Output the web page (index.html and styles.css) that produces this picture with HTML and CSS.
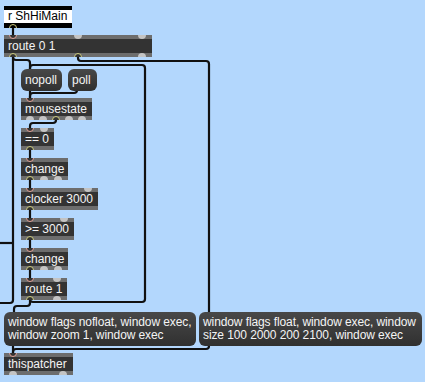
FILE: index.html
```html
<!DOCTYPE html>
<html lang="en">
  <head>
    <meta charset="UTF-8" />
    <title>ShHiMain patcher</title>
    <link rel="stylesheet" href="styles.css">
  </head>
  <body>
    <div class="patcher">
      <svg class="cords" width="425" height="382" viewBox="0 0 425 382">
        <!-- receive -> route -->
        <path d="M13 26 V38" />
        <!-- route left outlet -->
        <path d="M13 55 V57 Q13 60 16 60 H27 Q30 60 30 63 V71" />
        <path d="M13 55 V300 Q13 303 10 303 H0" />
        <path d="M0 243 H13" />
        <!-- route middle outlet -> float message -->
        <path d="M78 55 V58 Q78 61 81 61 H206 Q209 61 209 64 V314" />
        <!-- route 1 loops back to nopoll -->
        <path d="M30 298 V299 Q30 302 33 302 H142 Q145 302 145 299 V68 Q145 65 142 65 H33 Q30 65 30 68 V71" />
        <!-- message boxes -> mousestate -->
        <path d="M30 89 V100" />
        <path d="M77 89 V90 Q77 93 74 93 H33 Q30 93 30 96 V100" />
        <!-- mousestate chain -->
        <path d="M56 118 V120 Q56 123 53 123 H33 Q30 123 30 126 V130" />
        <path d="M30 148 V160" />
        <path d="M30 178 V190" />
        <path d="M30 208 V220" />
        <path d="M30 238 V250" />
        <path d="M30 268 V280" />
        <path d="M30 298 V303 Q30 306 27 306 H17 Q14 306 14 309 V314" />
        <!-- messages -> thispatcher -->
        <path d="M13 344 V354" />
        <path d="M209 344 V346 Q209 349 206 349 H16 Q13 349 13 352 V354" />
      </svg>

      <div class="obj recv">
        <div class="label">r ShHiMain</div>
        <div class="ports bottom"><i class="out on"></i></div>
      </div>

      <div class="obj route01">
        <div class="ports top"><i class="in on"></i><i></i><i></i></div>
        <div class="label">route 0 1</div>
        <div class="ports bottom"><i class="out on"></i><i class="out on"></i><i></i></div>
      </div>

      <div class="msg nopoll">nopoll</div>
      <div class="msg poll">poll</div>

      <div class="obj mousestate">
        <div class="ports top"><i class="in on"></i></div>
        <div class="label">mousestate</div>
        <div class="ports bottom"><i></i><i></i><i class="out on"></i><i></i><i></i></div>
      </div>

      <div class="obj eq0">
        <div class="ports top"><i class="in on"></i><i></i></div>
        <div class="label">== 0</div>
        <div class="ports bottom"><i class="out on"></i></div>
      </div>

      <div class="obj change1">
        <div class="ports top"><i class="in on"></i></div>
        <div class="label">change</div>
        <div class="ports bottom"><i class="out on"></i><i></i><i></i></div>
      </div>

      <div class="obj clocker">
        <div class="ports top"><i class="in on"></i><i></i></div>
        <div class="label">clocker 3000</div>
        <div class="ports bottom"><i class="out on"></i></div>
      </div>

      <div class="obj gte">
        <div class="ports top"><i class="in on"></i><i></i></div>
        <div class="label">&gt;= 3000</div>
        <div class="ports bottom"><i class="out on"></i></div>
      </div>

      <div class="obj change2">
        <div class="ports top"><i class="in on"></i></div>
        <div class="label">change</div>
        <div class="ports bottom"><i class="out on"></i><i></i><i></i></div>
      </div>

      <div class="obj route1">
        <div class="ports top"><i class="in on"></i><i></i></div>
        <div class="label">route 1</div>
        <div class="ports bottom"><i class="out on"></i><i></i></div>
      </div>

      <div class="msg nofloat">window flags nofloat, window exec,<br>window zoom 1, window exec</div>
      <div class="msg float">window flags float, window exec, window<br>size 100 2000 200 2100, window exec</div>

      <div class="obj thispatcher">
        <div class="ports top"><i class="in on"></i></div>
        <div class="label">thispatcher</div>
        <div class="ports bottom"><i></i><i></i></div>
      </div>
    </div>
  </body>
</html>
```

FILE: styles.css
```css
body {
  margin: 0;
  background: #b3d7fd;
}
.patcher {
  position: relative;
  width: 425px;
  height: 382px;
  overflow: hidden;
  background: #b3d7fd;
  font-family: "Liberation Sans", Arial, sans-serif;
  font-size: 12px;
}
.cords {
  position: absolute;
  left: 0;
  top: 0;
}
.cords path {
  fill: none;
  stroke: #111;
  stroke-width: 2.2;
  stroke-linecap: butt;
}

/* object boxes */
.obj {
  position: absolute;
  height: 22px;
  padding: 0 4px;
  overflow: hidden;
  color: #f4f4f4;
  line-height: 22px;
  white-space: nowrap;
  background: linear-gradient(#6d6d6d 4px, #333 4px, #333 18px, #6d6d6d 18px);
}
.label {
  position: relative;
  z-index: 1;
}
.ports {
  position: absolute;
  left: 0;
  right: 0;
  height: 8px;
  display: flex;
  justify-content: space-between;
  padding: 0 6px 0 5px;
}
.ports.top {
  top: -4px;
}
.ports.bottom {
  bottom: -4px;
}
.ports i {
  width: 8px;
  height: 8px;
  border-radius: 50%;
  box-sizing: border-box;
  background: #c4c4c4;
}
.ports i.in.on {
  background: #333;
  border: 1.5px solid #e7a397;
}
.ports i.out.on {
  background: #333;
  border: 1.5px solid #cfcd7e;
}

.recv {
  left: 4px;
  top: 6px;
  width: 60px;
  color: #000;
  background: linear-gradient(#000 4px, #fff 4px, #fff 17px, #000 17px);
}
.recv .label {
  line-height: 21px;
}
.recv .ports i.out.on {
  background: #000;
}
.route01 { left: 4px; top: 35px; width: 140px; }
.mousestate { left: 21px; top: 98px; width: 63px; }
.eq0 { left: 21px; top: 128px; width: 25px; }
.change1 { left: 21px; top: 158px; width: 39px; }
.clocker { left: 21px; top: 188px; width: 69px; }
.gte { left: 21px; top: 218px; width: 45px; }
.change2 { left: 21px; top: 248px; width: 39px; }
.route1 { left: 21px; top: 278px; width: 38px; }
.thispatcher { left: 4px; top: 353px; width: 61px; }

/* message boxes */
.msg {
  position: absolute;
  box-sizing: border-box;
  padding: 4px 4px;
  border-radius: 6px;
  color: #f4f4f4;
  line-height: 14px;
  white-space: nowrap;
  background: linear-gradient(#484848, #303030);
}
.nopoll { left: 21px; top: 69px; width: 41px; height: 22px; }
.poll { left: 68px; top: 69px; width: 29px; height: 22px; }
.nofloat,
.float {
  top: 312px;
  height: 34px;
  line-height: 13px;
  letter-spacing: -0.1px;
}
.nofloat {
  left: 4px;
  width: 192px;
}
.float {
  left: 199px;
  width: 223px;
}
```
